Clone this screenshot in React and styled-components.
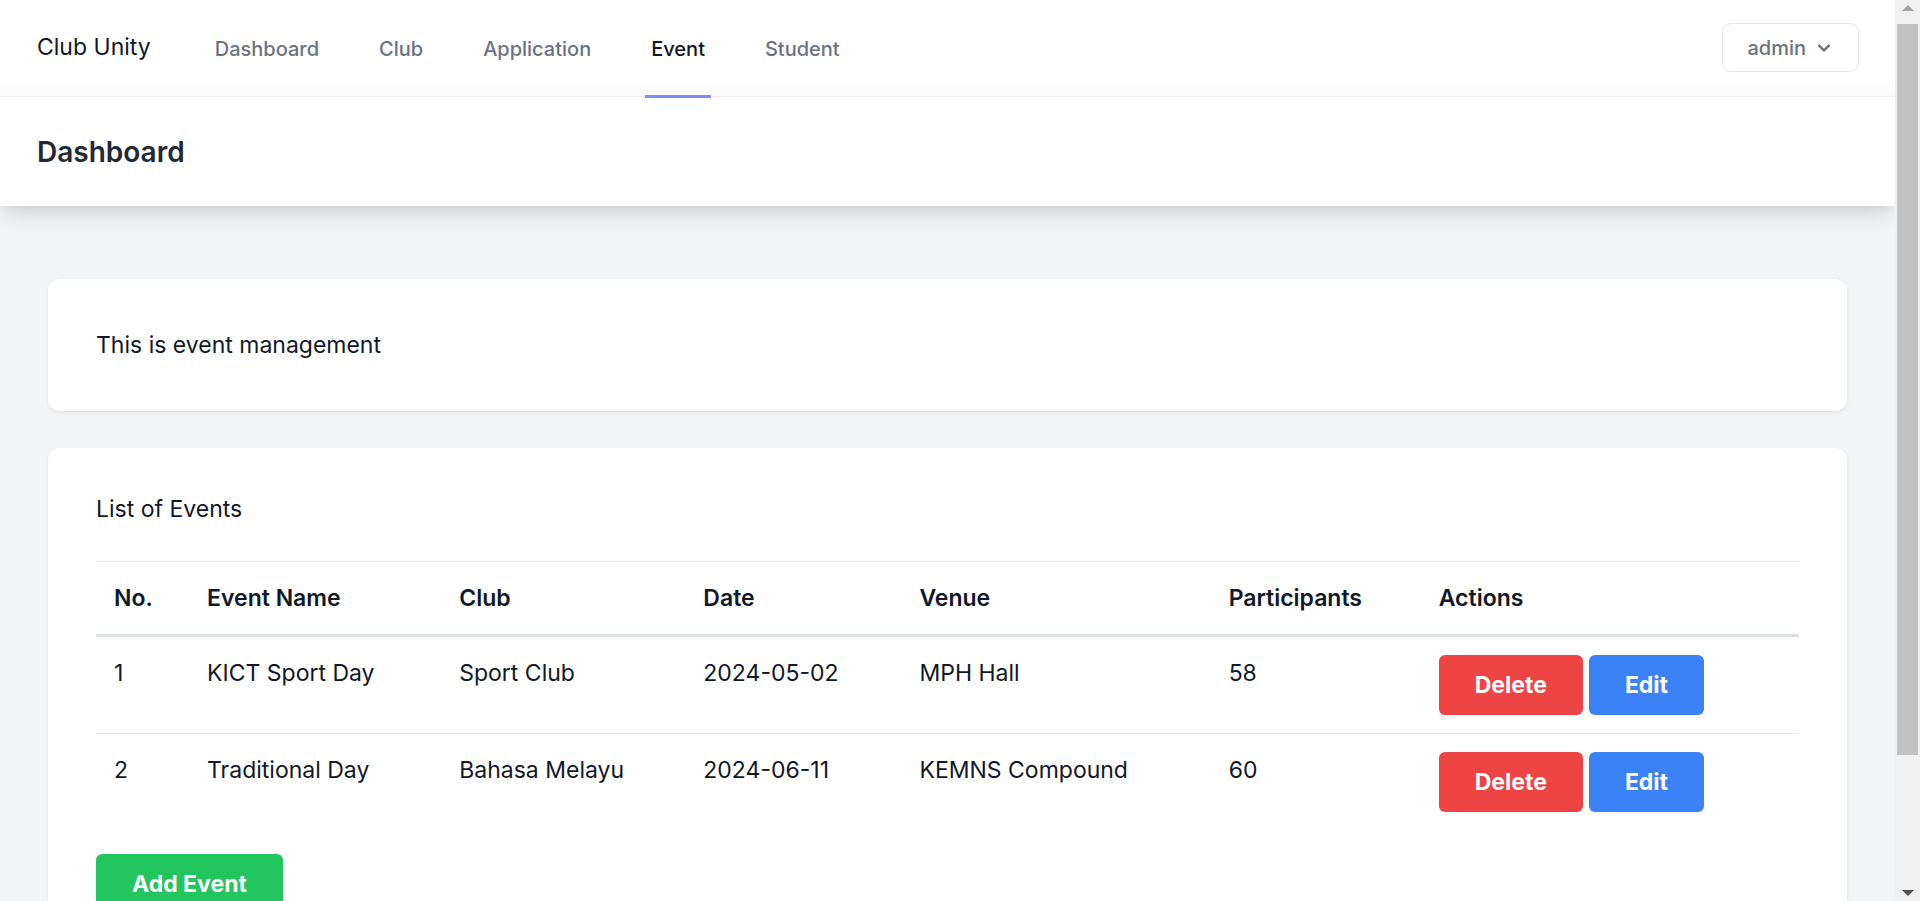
import React from "react";
import styled, { createGlobalStyle } from "styled-components";

const GlobalStyle = createGlobalStyle`
	html, body {
		margin: 0;
		padding: 0;
		background: #f3f4f6;
		font-family: Inter, "Noto Sans", sans-serif;
		color: #111827;
	}
	* {
		box-sizing: border-box;
	}
`;

const columns = [
	{ title: "No.", width: 93 },
	{ title: "Event Name", width: 252 },
	{ title: "Club", width: 244 },
	{ title: "Date", width: 216 },
	{ title: "Venue", width: 309 },
	{ title: "Participants", width: 210 },
	{ title: "Actions", width: 378 },
];

const events = [
	{ id: 1, name: "KICT Sport Day", club: "Sport Club", date: "2024-05-02", venue: "MPH Hall", participants: 58 },
	{ id: 2, name: "Traditional Day", club: "Bahasa Melayu", date: "2024-06-11", venue: "KEMNS Compound", participants: 60 },
];

const links = ["Dashboard", "Club", "Application", "Event", "Student"];

export default function App() {
	return (
		<>
			<GlobalStyle />
			<Page>
				<Nav>
					<NavLeft>
						<Brand>Club Unity</Brand>
						<NavLinks>
							{links.map((l) => (
								<NavLink key={l} $active={l === "Event"}>
									{l}
								</NavLink>
							))}
						</NavLinks>
					</NavLeft>
					<UserButton>
						admin
						<svg width="24" height="24" viewBox="0 0 20 20" fill="currentColor">
							<path
								fillRule="evenodd"
								d="M5.293 7.293a1 1 0 011.414 0L10 10.586l3.293-3.293a1 1 0 111.414 1.414l-4 4a1 1 0 01-1.414 0l-4-4a1 1 0 010-1.414z"
								clipRule="evenodd"
							/>
						</svg>
					</UserButton>
				</Nav>
				<Header>
					<PageTitle>Dashboard</PageTitle>
				</Header>
				<Main>
					<Card>
						<Text>This is event management</Text>
					</Card>
					<Card $pt={43}>
						<Text $mb={34}>List of Events</Text>
						<Table>
							<colgroup>
								{columns.map((c) => (
									<Col key={c.title} $w={c.width} />
								))}
							</colgroup>
							<thead>
								<HeadRow>
									{columns.map((c) => (
										<TH key={c.title}>{c.title}</TH>
									))}
								</HeadRow>
							</thead>
							<tbody>
								{events.map((e) => (
									<Row key={e.id}>
										<TD>{e.id}</TD>
										<TD>{e.name}</TD>
										<TD>{e.club}</TD>
										<TD>{e.date}</TD>
										<TD>{e.venue}</TD>
										<TD>{e.participants}</TD>
										<TD>
											<Actions>
												<Button $color="#ef4444">Delete</Button>
												<Button $color="#3b82f6">Edit</Button>
											</Actions>
										</TD>
									</Row>
								))}
							</tbody>
						</Table>
						<AddWrap>
							<Button $color="#22c55e">Add Event</Button>
						</AddWrap>
					</Card>
				</Main>
			</Page>
			<ScrollTrack>
				<ScrollArrow $dir="up" />
				<ScrollThumb />
				<ScrollArrow $dir="down" />
			</ScrollTrack>
		</>
	);
}

const Page = styled.div`
	margin-right: 25px;
`;

const Nav = styled.nav`
	position: relative;
	z-index: 2;
	height: 97px;
	background: linear-gradient(#fff 80%, #fafafa);
	border-bottom: 1px solid #f0f1f3;
	padding: 0 36px 0 37px;
	display: flex;
	align-items: stretch;
	justify-content: space-between;
`;

const NavLeft = styled.div`
	display: flex;
	align-items: stretch;
`;

const Brand = styled.div`
	display: flex;
	align-items: center;
	font-size: 23px;
	color: #111827;
	padding-bottom: 2px;
`;

const NavLinks = styled.div`
	display: flex;
	align-items: stretch;
	gap: 48px;
	margin-left: 58px;
`;

const NavLink = styled.a`
	display: flex;
	align-items: center;
	padding: 3px 6px 0;
	font-size: 20px;
	font-weight: 500;
	color: ${({ $active }) => ($active ? "#111827" : "#6b7280")};
	border-bottom: 3px solid ${({ $active }) => ($active ? "#818cf8" : "transparent")};
	margin-bottom: -2px;
	cursor: pointer;
`;

const UserButton = styled.button`
	align-self: center;
	margin-top: -1px;
	height: 49px;
	padding: 0 22px 0 24px;
	display: flex;
	align-items: center;
	gap: 6px;
	background: #fff;
	border: 1.5px solid #e5e7eb;
	border-radius: 9px;
	font-family: inherit;
	font-size: 20px;
	font-weight: 500;
	color: #6b7280;
`;

const Header = styled.header`
	position: relative;
	z-index: 1;
	height: 109px;
	background: #fff;
	padding: 0 36px 0 37px;
	display: flex;
	align-items: center;
	box-shadow: 0 12px 22px -4px rgba(0, 0, 0, 0.13), 0 4px 8px -2px rgba(0, 0, 0, 0.06);
`;

const PageTitle = styled.h2`
	margin: 0;
	font-size: 28px;
	font-weight: 600;
	line-height: 42px;
	color: #1f2937;
`;

const Main = styled.main`
	padding: 73px 48px 72px;
	display: flex;
	flex-direction: column;
	gap: 37px;
`;

const Card = styled.section`
	background: #fff;
	border-radius: 12px;
	padding: 48px;
	padding-top: ${({ $pt }) => $pt || 48}px;
	box-shadow: 0 1.5px 4px rgba(0, 0, 0, 0.07);
`;

const Text = styled.p`
	margin: 0 0 ${({ $mb }) => $mb || 0}px;
	font-size: 23px;
	line-height: 36px;
	color: #111827;
`;

const Table = styled.table`
	width: 100%;
	table-layout: fixed;
	border-collapse: collapse;
	border-top: 1px solid #e5e7eb;
	font-size: 23px;
	line-height: 36px;
`;

const Col = styled.col`
	width: ${({ $w }) => $w}px;
`;

const HeadRow = styled.tr`
	border-bottom: 3px solid #dee2e6;
`;

const Row = styled.tr`
	border-bottom: 1px solid #e5e7eb;
	&:last-child {
		border-bottom: 0;
	}
`;

const TH = styled.th`
	padding: 18px;
	text-align: left;
	font-weight: 600;
	color: #111827;
`;

const TD = styled.td`
	padding: 18px;
	vertical-align: top;
	color: #111827;
`;

const Actions = styled.div`
	display: flex;
	gap: 6px;
`;

const Button = styled.button`
	height: 60px;
	padding: 0 36px;
	border: 0;
	border-radius: 6px;
	background: ${({ $color }) => $color};
	color: #fff;
	font-family: inherit;
	font-size: 23px;
	font-weight: 700;
	cursor: pointer;
`;

const AddWrap = styled.div`
	margin-top: 24px;
`;

/* browser scrollbar as it shows in the screenshot */
const ScrollTrack = styled.div`
	position: fixed;
	top: 0;
	right: 0;
	bottom: 0;
	width: 25px;
	background: #f1f1f1;
	display: flex;
	flex-direction: column;
	z-index: 10;
`;

const ScrollArrow = styled.div`
	height: 24px;
	width: 100%;
	display: flex;
	align-items: center;
	justify-content: center;
	flex-shrink: 0;
	${({ $dir }) => ($dir === "down" ? "margin-top: auto;" : "")}
	&::before {
		content: "";
		width: 0;
		height: 0;
		border-left: 6px solid transparent;
		border-right: 6px solid transparent;
		${({ $dir }) =>
			$dir === "up"
				? `border-bottom: 6px solid #a3a3a3; margin-top: -8px;`
				: `border-top: 6px solid #505050; margin-top: 8px;`}
	}
`;

const ScrollThumb = styled.div`
	width: 21px;
	height: 731px;
	background: #c1c1c1;
	margin-left: 2px;
`;
